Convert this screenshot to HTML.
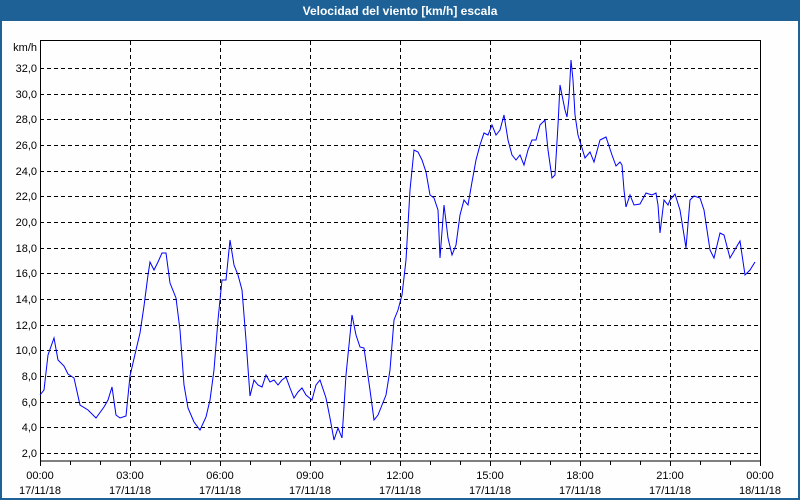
<!DOCTYPE html>
<html><head><meta charset="utf-8"><style>
html,body{margin:0;padding:0;background:#fdfefd;}
svg{display:block;font-family:"Liberation Sans","DejaVu Sans",sans-serif;}
</style></head><body>
<svg width="800" height="500" viewBox="0 0 800 500">
<rect x="0" y="0" width="800" height="500" fill="#fdfefd"/>
<rect x="0" y="0" width="800" height="21" fill="#1d6197"/>
<rect x="0" y="0" width="2" height="500" fill="#1d6197"/>
<rect x="798" y="0" width="2" height="500" fill="#1d6197"/>
<rect x="0" y="498" width="800" height="2" fill="#1d6197"/>
<text x="400" y="15" fill="#fff" font-size="12" font-weight="bold" text-anchor="middle">Velocidad del viento [km/h] escala</text>
<g stroke="#000" stroke-width="1" stroke-dasharray="4,3" shape-rendering="crispEdges">
<line x1="40" x2="760" y1="68.5" y2="68.5"/><line x1="40" x2="760" y1="94.5" y2="94.5"/><line x1="40" x2="760" y1="119.5" y2="119.5"/><line x1="40" x2="760" y1="145.5" y2="145.5"/><line x1="40" x2="760" y1="171.5" y2="171.5"/><line x1="40" x2="760" y1="196.5" y2="196.5"/><line x1="40" x2="760" y1="222.5" y2="222.5"/><line x1="40" x2="760" y1="248.5" y2="248.5"/><line x1="40" x2="760" y1="273.5" y2="273.5"/><line x1="40" x2="760" y1="299.5" y2="299.5"/><line x1="40" x2="760" y1="325.5" y2="325.5"/><line x1="40" x2="760" y1="350.5" y2="350.5"/><line x1="40" x2="760" y1="376.5" y2="376.5"/><line x1="40" x2="760" y1="402.5" y2="402.5"/><line x1="40" x2="760" y1="427.5" y2="427.5"/><line x1="40" x2="760" y1="453.5" y2="453.5"/>
<line x1="130.5" x2="130.5" y1="41" y2="461"/><line x1="220.5" x2="220.5" y1="41" y2="461"/><line x1="310.5" x2="310.5" y1="41" y2="461"/><line x1="400.5" x2="400.5" y1="41" y2="461"/><line x1="490.5" x2="490.5" y1="41" y2="461"/><line x1="580.5" x2="580.5" y1="41" y2="461"/><line x1="670.5" x2="670.5" y1="41" y2="461"/>
</g>
<rect x="40.5" y="40.5" width="720" height="420.5" fill="none" stroke="#000" stroke-width="1" shape-rendering="crispEdges"/>
<g stroke="#000" shape-rendering="crispEdges">
<path d="M40.5 461v5M70.5 461v4M100.5 461v4M130.5 461v5M160.5 461v4M190.5 461v4M220.5 461v5M250.5 461v4M280.5 461v4M310.5 461v5M340.5 461v4M370.5 461v4M400.5 461v5M430.5 461v4M460.5 461v4M490.5 461v5M520.5 461v4M550.5 461v4M580.5 461v5M610.5 461v4M640.5 461v4M670.5 461v5M700.5 461v4M730.5 461v4M760.5 461v5"/>
</g>
<polyline fill="none" stroke="#0000ff" stroke-width="1" points="40,395 44,390 48,355 54,338 58,360 64,366 68,374 74,378 80,405 88,410 96,418 104,407 108,400 112,387 116,415 120,418 126,416 130,376 136,350 140,333 144,306 148,275 150,262 154,270 158,262 162,253 166,253 170,283 176,298 180,330 184,385 188,408 194,422 200,430 206,417 210,400 214,370 218,320 222,280 226,280 230,240 234,265 238,275 242,290 246,340 250,396 254,380 258,385 262,387 266,375 270,382 274,380 278,385 282,380 286,377 290,388 294,398 298,392 302,388 306,395 312,400 316,385 320,380 326,398 330,418 334,440 338,428 342,438 346,375 352,315 356,335 360,347 364,348 370,390 374,420 378,415 382,405 386,395 390,370 394,320 398,310 402,295 406,260 410,190 414,150 418,152 422,160 426,172 430,195 434,198 438,210 440,258 444,205 448,238 452,255 456,245 460,215 464,200 468,205 472,182 476,160 480,145 484,133 488,135 492,125 496,135 500,130 504,115 508,140 512,155 516,160 520,155 524,165 528,150 532,140 536,140 540,125 545,120 548,150 552,178 555,175 558,125 560,85 562,95 565,110 567,117 569,98 571,60 573,80 575,115 578,135 582,148 585,158 590,152 594,162 600,140 606,137 612,155 616,166 620,162 622,165 624,190 626,207 630,195 634,205 640,204 646,193 652,195 656,193 658,205 660,233 664,200 668,205 670,200 675,194 680,210 684,235 686,248 690,200 694,196 700,198 704,210 710,250 714,258 720,233 724,235 730,258 740,241 745,275 750,270 755,262"/>
<g font-size="11" fill="#000" text-anchor="end">
<text x="37" y="51">km/h</text>
<text x="37" y="72">32,0</text><text x="37" y="98">30,0</text><text x="37" y="123">28,0</text><text x="37" y="149">26,0</text><text x="37" y="175">24,0</text><text x="37" y="200">22,0</text><text x="37" y="226">20,0</text><text x="37" y="252">18,0</text><text x="37" y="277">16,0</text><text x="37" y="303">14,0</text><text x="37" y="329">12,0</text><text x="37" y="354">10,0</text><text x="37" y="380">8,0</text><text x="37" y="406">6,0</text><text x="37" y="431">4,0</text><text x="37" y="457">2,0</text>
</g>
<g font-size="11" fill="#000" text-anchor="middle">
<text x="40" y="479">00:00</text><text x="40" y="494">17/11/18</text>
<text x="130" y="479">03:00</text><text x="130" y="494">17/11/18</text>
<text x="220" y="479">06:00</text><text x="220" y="494">17/11/18</text>
<text x="310" y="479">09:00</text><text x="310" y="494">17/11/18</text>
<text x="400" y="479">12:00</text><text x="400" y="494">17/11/18</text>
<text x="490" y="479">15:00</text><text x="490" y="494">17/11/18</text>
<text x="580" y="479">18:00</text><text x="580" y="494">17/11/18</text>
<text x="670" y="479">21:00</text><text x="670" y="494">17/11/18</text>
<text x="760" y="479">00:00</text><text x="760" y="494">18/11/18</text>
</g>
</svg>
</body></html>
